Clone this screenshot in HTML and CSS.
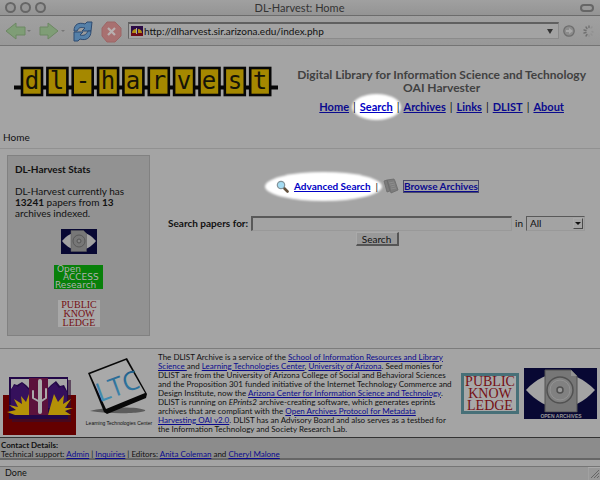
FILE: index.html
```html
<!DOCTYPE html>
<html lang="en">
<head>
<meta charset="utf-8">
<title>DL-Harvest: Home</title>
<link rel="stylesheet" href="styles.css">
</head>
<body>
<div class="titlebar">
  <div class="lights"><i></i><i></i><i></i></div>
  <div class="window-title">DL-Harvest: Home</div>
  <i class="pill"></i>
</div>
<div class="toolbar">
  <svg class="nav-icons" width="128" height="28" viewBox="0 0 128 28" aria-hidden="true">
    <g fill="#7f9d76" stroke="#6d8863" stroke-width="1" stroke-linejoin="round">
      <path d="M6 14 16 6v4h9v8h-9v4z"/>
      <path d="M58 14 48 6v4h-8v8h8v4z"/>
    </g>
    <path d="M27 13h4l-2 2zM61 13h4l-2 2z" fill="#777"/>
    <g fill="#5580a8" stroke="#2d4a70" stroke-width="1" stroke-linejoin="round">
      <path d="M74 14c0-7 5-9 11-7l2-2h5l-1 9h-9l3-3c-4-1-6-1-8 3z"/>
      <path d="M91 14c0 7-5 10-11 8l-2 2h-4V15h9l-3 3c4 1 6 0 8-4z"/>
    </g>
    <path d="M107 5h8l6 6v8l-6 6h-8l-5-6v-8z" fill="#a87070" stroke="#9c6666"/>
    <path d="m108 11 7 7m0-7-7 7" stroke="#b8b0b0" stroke-width="2.2"/>
  </svg>
  <div class="address">
    <svg width="12" height="10" viewBox="0 0 12 10" aria-hidden="true"><path fill="#2c0b45" d="M0 0h12v10H0z"/><path fill="#6d0b16" d="M0 7h12v3H0z"/><path fill="#b48f13" d="M1 7c0-3 2-4 4-4v4zm6 0V3c2 0 4 1 4 4z"/><path fill="#aaa" d="M5 2h1v6H5z"/></svg>
    <input class="url" aria-label="Address" value="http://dlharvest.sir.arizona.edu/index.php">
    <span class="arrow"></span>
  </div>
  <svg width="38" height="16" viewBox="0 0 38 16" aria-hidden="true">
    <circle cx="7" cy="8" r="5.2" fill="#8c8c8c" stroke="#6d6d6d" stroke-width="1.3"/>
    <path d="M4 7h3V5l4 3-4 3V9H4z" fill="#a8a8a8"/>
    <g stroke-width="1.4" stroke-linecap="round"><path d="M27 3v1.500M24 4l1 1.500M22 7l2 .5M22 10l2-.5M24 13l1-1.500" stroke="#707070"/><path d="M27 12v1.500M30 12l-1-1M31 9l-1-.5M30 4l-1 1" stroke="#919191"/></g>
  </svg>
</div>

<header class="masthead">
  <svg class="logo" width="266" height="32" viewBox="0 0 266 32" role="img" aria-label="dl-harvest">
    <path d="M1 21.500h264" stroke="#070707" stroke-width="4"/>
    <g fill="#a58800" stroke="#070707" stroke-width="2.600">
      <rect x="9" y="2" width="20" height="27"/><rect x="34.400" y="2" width="20" height="27"/><rect x="59.700" y="2" width="20" height="27"/><rect x="85.100" y="2" width="20" height="27"/><rect x="110.400" y="2" width="20" height="27"/><rect x="135.800" y="2" width="20" height="27"/><rect x="161.100" y="2" width="20" height="27"/><rect x="186.500" y="2" width="20" height="27"/><rect x="211.800" y="2" width="20" height="27"/><rect x="237.200" y="2" width="20" height="27"/>
    </g>
    <g class="logo-letters"><text x="19" y="23">d</text><text x="44" y="23">l</text><text x="70" y="23">-</text><text x="95" y="23">h</text><text x="120" y="23">a</text><text x="146" y="23">r</text><text x="171" y="23">v</text><text x="196" y="23">e</text><text x="222" y="23">s</text><text x="247" y="23">t</text></g>
  </svg>
  <div class="heading">
    <h1>Digital Library for Information Science and Technology<br>OAI Harvester</h1>
    <nav><a href="#">Home</a><span>|</span><a href="#" class="spot spot-small">Search</a><span>|</span><a href="#">Archives</a><span>|</span><a href="#">Links</a><span>|</span><a href="#">DLIST</a><span>|</span><a href="#">About</a></nav>
  </div>
</header>
<div class="crumb">Home</div>

<div class="columns">
  <aside class="stats">
    <h2>DL-Harvest Stats</h2>
    <p>DL-Harvest currently has<br><b>13241</b> papers from <b>13</b><br>archives indexed.</p>
    <div class="badges">
      <svg width="36" height="25" viewBox="0 0 72 50" preserveAspectRatio="none" aria-hidden="true"><path fill="#080833" d="M0 0h72v50H0z"/><path fill="#a1a1a1" d="M2 24C12 12 24 6 36 6s24 6 34 18C60 36 48 43 36 43S12 36 2 24z"/><path fill="#777" stroke="#5b5b5b" d="M20 3h25l6 6v36H20z"/><circle cx="36" cy="24" r="12" fill="none" stroke="#595959" stroke-width="2"/><circle cx="36" cy="24" r="4" fill="#858585" stroke="#555" stroke-width="2"/></svg>
      <svg width="49" height="24" viewBox="0 0 49 24" role="img" aria-label="Open Access Research"><path fill="#08800a" d="M0 0h49v24H0z"/><g class="access"><text x="3" y="7">Open</text><text x="9" y="15">ACCESS</text><text x="1" y="23">Research</text></g></svg>
      <svg width="42" height="27" viewBox="0 0 42 27" role="img" aria-label="Public Knowledge"><path fill="#a8a8a8" d="M0 0h42v27H0z"/><g class="pk-small"><text x="21" y="8">PUBLIC</text><text x="21" y="17">KNOW</text><text x="21" y="26">LEDGE</text></g></svg>
    </div>
  </aside>
  <main>
    <div class="options">
      <span class="spot spot-large">
        <svg width="13" height="13" viewBox="0 0 13 13" aria-hidden="true"><path d="m7.500 7.500 4 4" stroke="#63513c" stroke-width="2.600" stroke-linecap="round"/><circle cx="5" cy="5" r="3.700" fill="#a5dcf2" stroke="#84949b" stroke-width="1.200"/></svg>
        <a href="#">Advanced Search</a>
      </span>
      <span>|</span>
      <svg width="16" height="16" viewBox="0 0 16 16" aria-hidden="true"><path fill="#7c7c7c" stroke="#6b6b6b" stroke-width=".8" d="m1 3 3-1 3 11-3 1zM4 2l7-1 1 2 3 9-7 3z"/><path stroke="#929292" stroke-width=".8" d="m6 5 5-1M7 7l5-1M8 9l4-1M8 11l5-1"/></svg>
      <a href="#" class="focused">Browse Archives</a>
    </div>
    <form>
      <div class="query">
        <label for="q">Search papers for:</label>
        <input id="q" type="text">
        <label class="in" for="scope">in</label>
        <span class="picker"><select id="scope"><option>All</option></select><i></i></span>
      </div>
      <button type="button">Search</button>
    </form>
  </main>
</div>

<footer>
  <div class="about">
    <svg class="desert" width="74" height="60" viewBox="0 0 74 60" aria-hidden="true">
      <path fill="#640000" d="M0 18h73v40H0z"/><path fill="#320d32" d="M9 3h59v42H9z" opacity=".6"/>
      <path fill="#220747" d="M6 0h59v42H6z"/><path fill="#a6a6a6" d="M8 2h18v9l-3-3-4-3-5 3-3-1-3 6zM45 2h19v12l-3-6-4 1-4-5-5 4-3 3z"/>
      <path fill="#35105c" d="M8 12l4-4 3 2 4-4 7 7v18H8zM45 12l7-6 4 5 3-2 5 6v16H45z"/>
      <path fill="#5c123c" d="M26 1h19v37H26z"/>
      <path fill="#b49107" d="M5 38h21V17l-3 8-5-6 1 8-8-5 4 8-9-2 7 5-9 2 8 3zM45 38h23l-6-4 8-3-8 0 6-9-8 5 1-9-6 7-4-8z"/>
      <path fill="none" stroke="#aaa" stroke-linecap="round" stroke-linejoin="round" stroke-width="4" d="M37 4v31"/><path fill="none" stroke="#aaa" stroke-linecap="round" stroke-linejoin="round" stroke-width="2" d="M30 14v7l7 4M43 12v9l-6 4"/>
    </svg>
    <svg class="ltc" width="70" height="72" viewBox="0 0 70 72" role="img" aria-label="Learning Technologies Center">
      <defs><linearGradient id="blue" x1="1" y1="0" x2="0" y2="1"><stop offset="0" stop-color="#15507f"/><stop offset="1" stop-color="#4f9dbf"/></linearGradient></defs>
      <path fill="#5c5c5c" d="M6 54c12-4 47-5 55-1 3 3-30 5-55 1z"/><path fill="#080808" d="m4 16 39-15 20 36-1 4-39 16-3-2z"/><path fill="#a9a9a9" d="M6 17 42 3l19 33-39 16z"/>
      <text class="ltc-letters" fill="url(#blue)" transform="rotate(-20 34 28)" x="33" y="38">LTC</text>
      <text class="ltc-name" x="35" y="68">Learning Technologies Center</text>
    </svg>
    <p>The DLIST Archive is a service of the <a href="#">School of Information Resources and Library</a><br><a href="#">Science </a>and <a href="#">Learning Technologies Center</a>, <a href="#">University of Arizona</a>. Seed monies for<br>DLIST are from the University of Arizona College of Social and Behavioral Sciences<br>and the Proposition 301 funded initiative of the Internet Technology Commerce and<br>Design Institute, now the <a href="#">Arizona Center for Information Science and Technology</a>.<br>DLIST is running on <em>EPrints2</em> archive-creating software, which generates eprints<br>archives that are compliant with the <a href="#">Open Archives Protocol for Metadata</a><br><a href="#">Harvesting OAI v2.0</a>. DLIST has an Advisory Board and also serves as a testbed for<br>the Information Technology and Society Research Lab.</p>
    <svg class="pk" width="58" height="41" viewBox="0 0 58 41" role="img" aria-label="Public Knowledge"><path fill="#a8a8a8" stroke="#477078" stroke-width="3" d="M1.500 1.500h55v38h-55z"/><g class="pk-large"><text x="29" y="13">PUBLIC</text><text x="29" y="25">KNOW</text><text x="29" y="37">LEDGE</text></g></svg>
    <svg class="oa" width="73" height="51" viewBox="0 0 73 51" role="img" aria-label="Open Archives"><path fill="#080833" d="M0 0h73v51H0z"/><path fill="#a3a3a3" d="M2 22C12 11 24 5 36 5s24 6 35 17C60 34 48 40 36 40S12 33 2 22z"/><path fill="#777" stroke="#535353" d="M21 2h26l6 6v36H21z"/><path fill="#929292" d="M47 2v6h6z"/><circle cx="36" cy="22" r="13" fill="#818181" stroke="#525252" stroke-width="1.500"/><circle cx="36" cy="22" r="10" fill="none" stroke="#929292"/><circle cx="36" cy="22" r="3" fill="#999" stroke="#4f4f4f" stroke-width="1.500"/><path fill="#080833" d="M1 44.500h71V50H1z"/><text class="oa-name" x="37" y="50">OPEN ARCHIVES</text></svg>
  </div>
  <div class="contact"><b>Contact Details:</b><br>Technical support: <a href="#">Admin</a> | <a href="#">Inquiries</a> | Editors: <a href="#">Anita Coleman</a> and <a href="#">Cheryl Malone</a></div>
</footer>
<div class="status"><span>Done</span><svg width="12" height="13" viewBox="0 0 12 13" aria-hidden="true"><path d="M0 0v13M0 .5h12" stroke="#aaa"/><path d="m3 11 8-8M6 11l5-5M9 11l2-2" stroke="#666"/></svg></div>
</body>
</html>
```
FILE: styles.css
```css
* { box-sizing: border-box; }
body {
  margin: 0;
  min-height: 100vh;
  display: flex;
  flex-direction: column;
  background: #a4a4a4;
  color: #111;
  font-family: Lato, "Open Sans", sans-serif;
  font-size: 10px;
  line-height: 11px;
}
a { color: #0a0a8e; }
svg { display: block; flex: none; }
h1, h2, p { margin: 0; }
input, select, button { font: inherit; color: inherit; border-radius: 0; }

.titlebar {
  display: grid;
  grid-template-columns: 1fr auto 1fr;
  align-items: center;
  height: 16px;
  padding: 0 6px 0 5px;
  background: linear-gradient(#a0a0a0, #949494);
  border-bottom: 1px solid #6c6c6c;
  color: #333;
  font-size: 11px;
}
.lights { display: flex; gap: 4px; }
.lights i {
  width: 11px;
  height: 11px;
  border: 2px solid #666;
  border-radius: 50%;
  background: #969696;
}
.pill {
  justify-self: end;
  width: 14px;
  height: 8px;
  border: 2px solid #666;
  border-radius: 4px;
}
.toolbar {
  display: flex;
  align-items: center;
  height: 30px;
  background: linear-gradient(#a0a0a0, #989898);
  border-bottom: 1px solid #747474;
}
.address {
  flex: 1;
  display: flex;
  align-items: center;
  height: 17px;
  margin-right: 3px;
  padding: 0 5px 0 2px;
  border: 1px solid #8b8b8b;
  border-top: 2px solid #606060;
  border-left-color: #666;
  background: #a3a3a3;
}
.url {
  flex: 1;
  min-width: 0;
  padding: 0 1px;
  border: 0;
  background: none;
}
.arrow {
  border: 3px solid transparent;
  border-top: 5px solid #333;
  border-bottom: 0;
}

.masthead {
  display: flex;
  justify-content: space-between;
  padding: 20px 14px 0 13px;
}
.logo-letters {
  font: 24px "DejaVu Sans Mono", monospace;
  text-anchor: middle;
  fill: #161408;
}
.heading { text-align: center; }
h1 {
  padding-top: 2px;
  color: #414141;
  font-size: 12px;
  line-height: 13px;
}
nav {
  position: relative;
  z-index: 0;
  display: flex;
  justify-content: center;
  gap: 4px;
  margin-top: 6px;
  font-size: 11px;
  line-height: 14px;
}
nav a { font-weight: 700; }
.spot { position: relative; }
.spot::before {
  content: "";
  position: absolute;
  z-index: -1;
  border-radius: 50%;
  background: #fff;
  filter: blur(1px);
}
.spot-small::before { inset: -6px -8px; }
.spot-large::before { inset: -8px -11px; }
a.spot, .spot a { color: #0000c4; }
.crumb {
  margin-top: 18px;
  padding: 0 3px 5px;
  border-bottom: 1px solid #919191;
}
.columns {
  display: flex;
  align-items: flex-start;
  padding: 6px 8px 0 7px;
}
.stats {
  width: 143px;
  padding: 8px 7px;
  background: #929292;
  border: 1px solid #818181;
}
.stats h2 { font-size: 10px; line-height: 11px; }
.stats p { margin-top: 11px; }
.badges {
  display: flex;
  flex-direction: column;
  align-items: center;
  gap: 11px;
  margin-top: 10px;
}
.access { font: 9px "DejaVu Sans", sans-serif; fill: #b0b0b0; }
.pk-small, .pk-large { font: 10px "Liberation Serif", serif; text-anchor: middle; fill: #750f14; }
.pk-large { font-size: 14px; }

main { flex: 1; padding: 23px 0 0 12px; }
.options {
  position: relative;
  z-index: 0;
  display: flex;
  justify-content: center;
  align-items: center;
  gap: 5px;
  height: 16px;
}
.options a { font-weight: 700; }
.spot-large { display: flex; align-items: center; gap: 5px; }
.focused { outline: 1px solid #4a4a6a; }
form { display: flex; flex-direction: column; align-items: center; margin-top: 22px; }
.query { display: flex; align-items: center; gap: 3px; align-self: stretch; padding-left: 6px; }
.query label { font-weight: 700; }
.query .in { font-weight: 400; }
.query input {
  flex: 1;
  min-width: 0;
  height: 15px;
  padding: 0 2px;
  background: #a3a3a3;
  border: 1px solid #999;
  border-top: 2px solid #595959;
  border-left: 2px solid #595959;
}
.picker {
  position: relative;
  width: 59px;
  margin-right: 7px;
}
.picker select {
  display: block;
  width: 100%;
  height: 15px;
  padding: 0 3px;
  appearance: none;
  background: #a3a3a3;
  border: 1px solid #999;
  border-top-color: #595959;
  border-left-color: #595959;
}
.picker i {
  position: absolute;
  top: 2px;
  right: 2px;
  width: 10px;
  height: 11px;
  border: 1px solid #aaa;
  border-right-color: #4a4a4a;
  border-bottom-color: #4a4a4a;
  pointer-events: none;
}
.picker i::after {
  content: "";
  display: block;
  margin: 3px 1px;
  border: 3px solid transparent;
  border-top-color: #111;
  border-bottom: 0;
}
form button {
  width: 43px;
  height: 14px;
  margin-top: 1px;
  padding: 0;
  background: #999;
  border: 1px solid #aaa;
  border-right: 2px solid #555;
  border-bottom: 2px solid #555;
  line-height: 10px;
}

footer { margin-top: auto; border-top: 1px solid #7c7c7c; }
.about {
  display: flex;
  align-items: center;
  height: 88px;
  padding: 0 3px;
}
.desert { margin-top: 28px; }
.ltc { margin: 0 4px 0 7px; }
.ltc-letters { font: 26px "Open Sans", sans-serif; text-anchor: middle; }
.ltc-name { font: 5px "Liberation Sans", sans-serif; text-anchor: middle; fill: #111; }
.about p {
  flex: 1;
  font-size: 8px;
  line-height: 9px;
  white-space: nowrap;
}
.pk { margin-right: 5px; }
.oa-name { font: bold 5px "Liberation Sans", sans-serif; text-anchor: middle; fill: #999; }
.contact {
  height: 23px;
  padding: 3px 1px 0;
  background: #8c8c8c;
  border-top: 1px solid #333;
  border-bottom: 2px solid #666;
  font-size: 8px;
  line-height: 9px;
}
.status {
  display: flex;
  justify-content: space-between;
  height: 14px;
  margin-top: 6px;
  padding-left: 5px;
  background: #989898;
  border-top: 1px solid #767676;
  font-size: 9px;
}
```
